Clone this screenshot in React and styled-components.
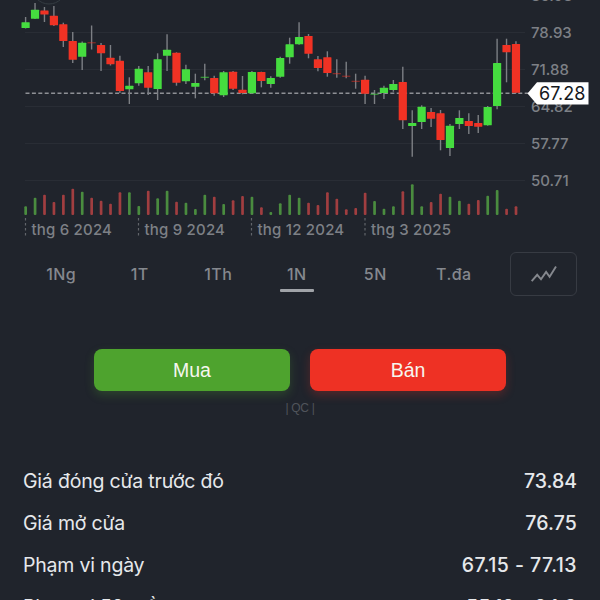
import React, { useState } from "react";
import styled, { createGlobalStyle, ThemeProvider } from "styled-components";

const night = {
  bg: '#20242c',
  grid: '#292d35',
  up: '#45dc3f',
  down: '#f03224',
  volUp: '#4a8c3f',
  volDown: '#a13e40',
  wick: '#7c7f84',
  axis: '#7d8086',
  muted: '#85888e',
  text: '#e6e8eb',
  line: '#373b43',
};

const GlobalStyle = createGlobalStyle`
  * { box-sizing: border-box; }
  body {
    margin: 0;
    background: ${night.bg};
    font-family: Inter, "Liberation Sans", sans-serif;
    overflow: hidden;
  }
`

const Screen = styled.main`
  width: 600px;
  height: 600px;
  overflow: hidden;
  display: flex;
  flex-direction: column;
  background: ${({ theme }) => theme.bg};
`

const ChartSvg = styled.svg`
  display: block;
  flex: none;
  width: 600px;
  height: 243px;
`

const AxisText = styled.text`
  font-size: 15px;
  font-weight: 500;
  letter-spacing: ${props => props.$spacing || '0'};
  fill: ${({ theme }) => theme.axis};
`

const PriceText = styled.text`
  font-size: 18px;
  font-weight: 400;
  fill: #15181d;
`

const RangeBar = styled.nav`
  flex: none;
  height: 62px;
  padding: 9px 23px 0 22px;
  display: flex;
  justify-content: space-between;
  align-items: flex-start;
`

const Ranges = styled.div`
  display: flex;
`

const RangeTab = styled.button`
  width: 78.5px;
  height: 40px;
  padding: 0;
  display: flex;
  flex-direction: column;
  align-items: center;
  justify-content: space-between;
  border: none;
  background: none;
  cursor: pointer;
  font: 500 16px/44px Inter, sans-serif;
  letter-spacing: 0.4px;
  color: ${({ theme }) => theme.muted};

  &::after {
    content: '';
    flex: none;
    width: 34px;
    height: 3px;
    margin-top: -7px;
    border-radius: 1px;
    background: ${props => props.$active ? '#a0a3a8' : 'transparent'};
  }
`

const ChartTypeButton = styled.button`
  width: 67px;
  height: 44px;
  padding: 0;
  display: flex;
  align-items: center;
  justify-content: center;
  background: none;
  border: 1.5px solid ${({ theme }) => theme.line};
  border-radius: 6px;
`

const Actions = styled.section`
  flex: none;
  display: flex;
  justify-content: center;
  gap: 20px;
  padding-top: 44px;
`

const TradeButton = styled.button`
  width: 196px;
  height: 42px;
  padding: 0;
  border: none;
  border-radius: 8px;
  font: 400 19.5px/42px "Liberation Sans", sans-serif;
  color: #f6f6ef;
  background: ${props => props.$sell ? '#ee3124' : '#4ea32e'};
  box-shadow: 0 4px 10px ${props => props.$sell ? 'rgba(238, 49, 36, 0.25)' : 'rgba(78, 163, 46, 0.25)'};
`

const AdMark = styled.div`
  flex: none;
  height: 68.6px;
  padding-top: 10px;
  text-align: center;
  font: 400 12px/15px "Liberation Sans", sans-serif;
  letter-spacing: -0.3px;
  color: #50545b;
`

const Stats = styled.dl`
  flex: none;
  margin: 0;
  padding: 0 23px;
`

const StatRow = styled.div`
  height: 42px;
  display: flex;
  align-items: center;
  justify-content: space-between;
  font-size: 19.5px;
  color: ${({ theme }) => theme.text};
`

const StatLabel = styled.dt`
  font-weight: 400;
  letter-spacing: -0.2px;
`

const StatValue = styled.dd`
  margin: 0;
  font-weight: 500;
  letter-spacing: ${props => props.$spacing || '0'};
`

// [high, body top, body bottom, low, rising]
const candles = [
  [17, 22.3, 28, 28.5, 1], [3, 9.7, 18.8, 19, 1], [7, 10.5, 14.5, 22, 0],
  [6, 15.7, 25.3, 26, 0], [22.7, 24.3, 41, 47, 0], [32, 41, 59.7, 63, 0],
  [41.5, 42.7, 56.7, 70, 1], [25.5, 42.3, 43.3, 49.5, 0], [43, 45, 53.3, 71, 0],
  [45, 57.7, 64.3, 65.5, 0], [55.7, 60.7, 91, 93, 0], [77.3, 85.7, 89.3, 104, 1],
  [66, 68.7, 83.3, 85.7, 1], [66, 72.3, 87.7, 95, 0], [53.3, 59.3, 89, 100, 1],
  [34.3, 49.7, 55.7, 71, 1], [52.3, 52.7, 82.7, 85.7, 0], [64.7, 69.3, 81.3, 84, 1],
  [73.7, 83, 86.7, 98.3, 1], [63.7, 76.7, 78, 80.3, 1], [75.7, 78, 93.3, 95.7, 0],
  [71, 72.3, 95.3, 97, 1], [71, 71.7, 88.7, 90, 0], [76, 89.7, 93, 94.3, 0],
  [71, 72, 93.3, 93.7, 1], [71.7, 72, 81, 87.3, 0], [76.3, 78, 84, 87.7, 1],
  [56.7, 58, 76.7, 77.7, 1], [37.7, 44.3, 57.3, 63.7, 1], [22.3, 37, 44.3, 44.7, 1],
  [34, 36, 53.7, 58.3, 0], [56, 59.3, 68, 71.3, 0], [51.3, 57.3, 73, 76.7, 0],
  [59.3, 73.2, 74.2, 77.7, 0], [61.7, 75.7, 76.7, 78.3, 0], [73.7, 80.8, 81.8, 88.7, 0],
  [75.7, 79.7, 93.7, 104, 0], [90, 93.7, 94.9, 104, 1], [85.7, 87.7, 93, 99, 1],
  [80, 84, 90, 91.7, 1], [66.7, 82, 120.3, 129, 0], [110.3, 123, 126, 156.7, 1],
  [105.3, 106.7, 122, 129, 1], [108, 112, 118.7, 127, 0], [110, 113.3, 140, 150.3, 0],
  [124, 125.7, 148, 156, 1], [110.3, 118, 124, 129, 1], [113.3, 121, 126, 134, 0],
  [115, 123, 126.7, 133, 0], [106, 107, 125.3, 125.7, 1], [38.7, 63, 106, 109.3, 1],
  [38.7, 45, 52.3, 82.3, 0], [41.3, 44, 92.7, 93.3, 0],
]

const volumes = [
  8.7, 17.3, 20.3, 13, 20.3, 26.3, 23.3, 17.3, 14.3, 11.3, 22.7, 22.7, 9, 24.3,
  16.7, 24.3, 13.3, 12.3, 6, 20.3, 18.3, 11, 14.7, 19, 18.3, 7.7, 3, 11.7, 20.3,
  17.3, 12.3, 10, 22.7, 16.3, 5.7, 7, 22.3, 14, 6.3, 8.7, 23.7, 30.7, 8.7, 13,
  21.3, 18.3, 14.3, 11.3, 15, 19.3, 25, 6.3, 8.7,
]

const prices = [
  ['85.98', -5], ['78.93', 32], ['71.88', 69], ['64.82', 106], ['57.77', 143], ['50.71', 180],
]

const months = [
  ['thg 6 2024', 25.5], ['thg 9 2024', 138.5], ['thg 12 2024', 251.5], ['thg 3 2025', 365],
]

const stats = [
  ['Giá đóng cửa trước đó', '73.84'],
  ['Giá mở cửa', '76.75', '0.15px'],
  ['Phạm vi ngày', '67.15 - 77.13', '0.45px'],
  ['Phạm vi 52 tuần', '55.12 - 84.9', '0.1px'],
]

const xOf = (i) => 25.6 + i * 9.43

const PriceChart = () => (
  <ChartSvg viewBox="0 0 600 243">
    <circle cx="49" cy="-13" r="17" fill="none" stroke="#343c42" strokeWidth="1" />
    {prices.map(([label, y]) => (
      <g key={label}>
        <line x1="25" x2="525" y1={y + 0.5} y2={y + 0.5} stroke={night.grid} />
        <AxisText x="531" y={y + 5.5}>{label}</AxisText>
      </g>
    ))}
    <line x1="25.5" x2="530" y1="93.2" y2="93.2" stroke="#8e9095" strokeWidth="1.5" strokeDasharray="4 2.4" />
    {candles.map(([high, top, bottom, low, up], i) => {
      const doji = bottom - top < 1.5
      return (
        <g key={i}>
          <line x1={xOf(i)} x2={xOf(i)} y1={high} y2={low} stroke={night.wick} strokeWidth="1.4" />
          <rect
            x={xOf(i) - 4.1} y={top} width="8.2" height={bottom - top} rx={doji ? 0 : 0.5}
            fill={up ? night.up : night.down} opacity={doji ? 0.6 : 1}
          />
        </g>
      )
    })}
    {volumes.map((h, i) => (
      <rect key={i} x={xOf(i) - 1.3} y={215 - h} width="2.7" height={h} rx="1"
        fill={candles[i][4] ? night.volUp : night.volDown} />
    ))}
    {months.map(([label, x]) => (
      <g key={label}>
        <line x1={x} x2={x} y1="218" y2="238" stroke="#62656b" strokeWidth="1.2" strokeDasharray="2.5 2.5" />
        <AxisText x={x + 6} y="235" $spacing="0.2px">{label}</AxisText>
      </g>
    ))}
    <path d="M527.5 93.5L537 82.3H588.5V104.5H537Z" fill="#fff" />
    <PriceText x="539" y="99.8">67.28</PriceText>
  </ChartSvg>
)

const App = () => {
  const [range, setRange] = useState('1N')

  return (
    <ThemeProvider theme={night}>
      <GlobalStyle />
      <Screen>
        <PriceChart />
        <RangeBar>
          <Ranges>
            {['1Ng', '1T', '1Th', '1N', '5N', 'T.đa'].map(r => (
              <RangeTab key={r} $active={r === range} onClick={() => setRange(r)}>{r}</RangeTab>
            ))}
          </Ranges>
          <ChartTypeButton aria-label="Chart">
            <svg width="28" height="20" viewBox="0 0 28 20" fill="none" stroke="#85888e" strokeWidth="1.9">
              <path d="M1.7 17.2L7.2 10.8L11 15.3L16.1 8L19.6 12.8L26 2.4" />
            </svg>
          </ChartTypeButton>
        </RangeBar>
        <Actions>
          <TradeButton>Mua</TradeButton>
          <TradeButton $sell>Bán</TradeButton>
        </Actions>
        <AdMark>| QC |</AdMark>
        <Stats>
          {stats.map(([label, value, spacing]) => (
            <StatRow key={label}>
              <StatLabel>{label}</StatLabel>
              <StatValue $spacing={spacing}>{value}</StatValue>
            </StatRow>
          ))}
        </Stats>
      </Screen>
    </ThemeProvider>
  )
}

export default App
